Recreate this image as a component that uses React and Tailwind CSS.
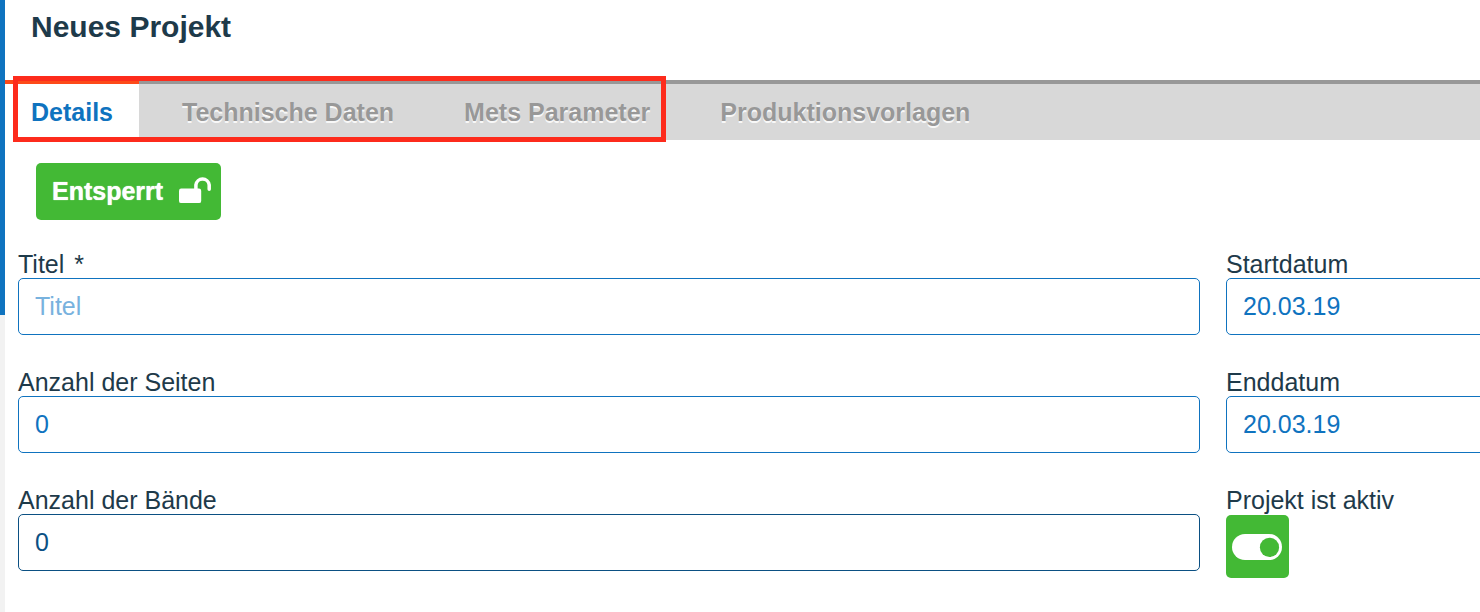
import React from "react";

const tabs = ["Technische Daten", "Mets Parameter", "Produktionsvorlagen"];

const tones = {
  blue: "border-[#0f73bf] text-[#0f73bf]",
  dark: "border-[#0b5083] text-[#0b5083]",
};

function Field({ id, label, required, tone = "blue", ...rest }) {
  return (
    <div className="flex flex-col">
      <label htmlFor={id} className="flex gap-[10px] leading-[28px]">
        {label}
        {required && <span>*</span>}
      </label>
      <input
        id={id}
        type="text"
        className={`h-[57px] w-full rounded-[5px] border bg-white px-4 placeholder:text-[#78b2de] ${tones[tone]}`}
        {...rest}
      />
    </div>
  );
}

function UnlockIcon() {
  return (
    <svg className="mb-[3px] h-7 w-8" viewBox="0 0 32 28" fill="none" aria-hidden="true">
      <rect x="0" y="12.5" width="22.2" height="14.6" rx="2.2" fill="#fff" />
      <path
        d="M16.9 13.5V8.9A6.7 6.7 0 0 1 30.2 8.9V13.2"
        stroke="#fff"
        strokeWidth="3.5"
        strokeLinecap="round"
      />
    </svg>
  );
}

function ToggleIcon() {
  return (
    <svg className="h-[26px] w-[51px]" viewBox="0 0 51 26" aria-hidden="true">
      <rect width="50" height="26" rx="13" fill="#fff" />
      <circle cx="37.5" cy="13.4" r="9.6" fill="#43b935" />
    </svg>
  );
}

export default function App() {
  return (
    <div className="flex min-h-screen overflow-hidden bg-white font-['Liberation_Sans',Arial,sans-serif] text-[25px] text-[#1e3a4a]">
      <aside className="w-[5px] shrink-0 bg-[#f2f2f2]">
        <div className="h-[315px] bg-[#0f73bf]" />
      </aside>

      <main className="min-w-0 flex-1">
        <header className="flex h-20 items-start px-[26px] pt-[10px]">
          <h1 className="text-[30px] leading-[34px] font-bold">Neues Projekt</h1>
        </header>

        <div className="relative">
          <nav className="flex h-[60px] bg-[#d8d8d8] font-bold">
            <button
              type="button"
              className="border-t-4 border-[#fd4a1a] bg-white px-[26px] pt-[2px] text-[#0f73bf]"
            >
              Details
            </button>
            <div className="flex flex-1 gap-[18px] border-t-4 border-[#989898] pl-[17px]">
              {tabs.map((tab) => (
                <button
                  key={tab}
                  type="button"
                  className="px-[26px] pt-[2px] text-[#989898] [text-shadow:0_2px_0_#f8f8f8]"
                >
                  {tab}
                </button>
              ))}
            </div>
          </nav>
          <div className="pointer-events-none absolute -top-1 left-2 h-[66px] w-[653px] border-[5px] border-[#fd2b1c]" />
        </div>

        <form className="pt-[23px] pl-[13px]">
          <button
            type="button"
            className="ml-[18px] flex h-[57px] items-center gap-4 rounded-[5px] bg-[#43b935] pr-[10px] pl-4 font-bold text-white [text-shadow:0_0_1px_#fff]"
          >
            Entsperrt
            <UnlockIcon />
          </button>

          <div className="mt-[30px] -mr-[26px] grid grid-cols-[minmax(0,1fr)_280px] gap-x-[26px] gap-y-[33px]">
            <Field id="titel" label="Titel" required placeholder="Titel" />
            <Field id="start" label="Startdatum" defaultValue="20.03.19" />
            <Field id="seiten" label="Anzahl der Seiten" defaultValue="0" />
            <Field id="ende" label="Enddatum" defaultValue="20.03.19" />
            <Field id="baende" label="Anzahl der Bände" defaultValue="0" tone="dark" />
            <div className="flex flex-col items-start gap-px">
              <label htmlFor="aktiv" className="leading-[28px]">
                Projekt ist aktiv
              </label>
              <button
                id="aktiv"
                type="button"
                role="switch"
                aria-checked="true"
                className="flex size-[63px] items-center justify-center rounded-[5px] bg-[#43b935]"
              >
                <ToggleIcon />
              </button>
            </div>
          </div>
        </form>
      </main>
    </div>
  );
}
